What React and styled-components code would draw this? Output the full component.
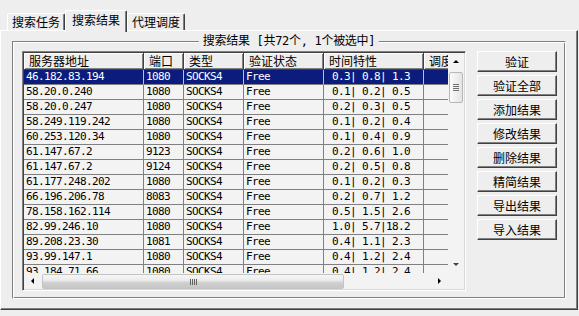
import React from "react";
import styled, { createGlobalStyle } from "styled-components";

const BG = "#eeeeee";
const LIST_BG = "#f3f3f3";
const SEL = "#0c1c7c";

const Global = createGlobalStyle`
  html, body { margin: 0; padding: 0; background: ${BG}; }
  body { font-family: "Noto Sans CJK SC", "Noto Sans", sans-serif; font-size: 12px; color: #000; }
  * { box-sizing: border-box; }
`;

const Screen = styled.div`
  width: 579px;
  height: 316px;
  padding-top: 10px;
  background: ${BG};
  overflow: hidden;
`;

const TabStrip = styled.div`
  display: flex;
  align-items: flex-end;
  height: 22px;
  margin-bottom: -2px;
  padding-left: 7px;
`;

const Tab = styled.div`
  position: relative;
  z-index: ${(p) => (p.$active ? 2 : 1)};
  width: ${(p) => p.$w}px;
  height: ${(p) => (p.$active ? 22 : 17)}px;
  margin-bottom: ${(p) => (p.$active ? 0 : 2)}px;
  padding-bottom: ${(p) => (p.$active ? 4 : 0)}px;
  display: flex;
  align-items: center;
  justify-content: center;
  background: ${BG};
  border-top: 1px solid #fff;
  border-left: 1px solid #fff;
  border-right: 1px solid #404040;
  box-shadow: inset -1px 0 0 #808080;
  border-radius: 2px 2px 0 0;
  font-size: 12px;
  line-height: 14px;
  white-space: nowrap;
`;

const Panel = styled.div`
  width: 578px;
  height: 280px;
  border-top: 1px solid #fff;
  border-left: 1px solid #fff;
  border-right: 1px solid #404040;
  border-bottom: 1px solid #404040;
  box-shadow: inset -1px -1px 0 #808080;
  padding: 10px 11px 10px 11px;
`;

const GroupBox = styled.div`
  position: relative;
  height: 258px;
  border: 1px solid;
  border-color: #808080 #fff #fff #808080;
  box-shadow: inset 1px 1px 0 #fff, inset -1px -1px 0 #808080;
  padding: 9px 8px 0 9px;
  display: flex;
  align-items: flex-start;
  gap: 11px;
`;

const GroupTitle = styled.div`
  position: absolute;
  top: -8px;
  left: 50%;
  transform: translateX(-50%);
  padding: 0 4px;
  background: ${BG};
  font-family: "DejaVu Sans Mono", "Noto Sans CJK SC", monospace;
  font-size: 12px;
  letter-spacing: -0.3px;
  line-height: 14px;
  white-space: pre;
`;

const ListView = styled.div`
  width: 444px;
  height: 240px;
  flex: none;
  display: grid;
  grid-template-columns: 424px 16px;
  grid-template-rows: 220px 16px;
  border: 1px solid;
  border-color: #808080 #fff #fff #808080;
  box-shadow: inset 1px 1px 0 #404040, inset -1px -1px 0 #d8d8d8;
  padding: 1px;
  background: ${LIST_BG};
`;

const Body = styled.div`
  overflow: hidden;
  display: flex;
  flex-direction: column;
`;

const HeaderRow = styled.div`
  display: flex;
  flex: none;
  width: max-content;
`;

const HeadCell = styled.div`
  flex: none;
  width: ${(p) => p.$w}px;
  height: 17px;
  padding-left: 5px;
  background: ${BG};
  border-right: 1px solid #404040;
  border-bottom: 1px solid #404040;
  box-shadow: inset 1px 1px 0 #fff, inset -1px -1px 0 #808080;
  font-size: 12px;
  line-height: 16px;
  white-space: nowrap;
  overflow: hidden;
`;

const Row = styled.div`
  display: flex;
  flex: none;
  width: max-content;
  background: ${(p) => (p.$sel ? SEL : "transparent")};
  color: ${(p) => (p.$sel ? "#fff" : "#000")};
`;

const Cell = styled.div`
  flex: none;
  width: ${(p) => p.$w}px;
  height: 15px;
  padding-left: 2px;
  border-right: 1px solid ${(p) => (p.$sel ? "#c0c0c0" : "#808080")};
  border-bottom: 1px solid #808080;
  font-family: "DejaVu Sans Mono", "Liberation Mono", monospace;
  font-size: 11px;
  letter-spacing: -0.62px;
  line-height: 14px;
  white-space: pre;
  overflow: hidden;
`;

const VScroll = styled.div`
  display: flex;
  flex-direction: column;
  background: ${LIST_BG};
`;

const HScroll = styled.div`
  display: flex;
  background: ${LIST_BG};
`;

const Corner = styled.div`
  background: ${LIST_BG};
`;

const ArrowBox = styled.div`
  flex: none;
  width: ${(p) => (p.$h ? 17 : 16)}px;
  height: ${(p) => (p.$h ? 16 : 17)}px;
  display: flex;
  align-items: center;
  justify-content: center;
`;

const Tri = styled.span`
  width: 0;
  height: 0;
  ${(p) =>
    p.$dir === "up"
      ? `border-left:3px solid transparent;border-right:3px solid transparent;border-bottom:3px solid #000;`
      : p.$dir === "down"
      ? `border-left:3px solid transparent;border-right:3px solid transparent;border-top:3px solid #404040;`
      : p.$dir === "left"
      ? `border-top:3px solid transparent;border-bottom:3px solid transparent;border-right:3px solid #000;`
      : `border-top:3px solid transparent;border-bottom:3px solid transparent;border-left:3px solid #000;`}
`;

const VThumb = styled.div`
  flex: none;
  margin: 2px 1px 0 1px;
  width: 14px;
  height: 31px;
  border: 1px solid #b8b8b8;
  border-radius: 2px;
  background: linear-gradient(to right, #fafafa, #e4e4e4);
  display: flex;
  flex-direction: column;
  align-items: center;
  justify-content: center;
  gap: 1px;
`;

const VGrip = styled.span`
  width: 6px;
  height: 1px;
  background: #707070;
`;

const HThumb = styled.div`
  flex: none;
  margin-left: 1px;
  width: 302px;
  height: 15px;
  margin-top: 1px;
  border: 1px solid #c4c4c4;
  border-radius: 2px;
  background: linear-gradient(#f6f6f6 0%, #ececec 40%, #cfcfcf 60%, #c6c6c6 100%);
  display: flex;
  align-items: center;
  justify-content: center;
  gap: 1px;
`;

const HGrip = styled.span`
  width: 1px;
  height: 6px;
  background: #606060;
`;

const Spacer = styled.div`
  flex: 1;
`;

const ButtonCol = styled.div`
  flex: none;
  width: 80px;
  display: flex;
  flex-direction: column;
  gap: 3px;
`;

const Btn = styled.button`
  width: 80px;
  height: 21px;
  padding: 0;
  background: ${BG};
  border: 1px solid;
  border-color: #fff #404040 #404040 #fff;
  box-shadow: inset -1px -1px 0 #808080;
  font-family: "Noto Sans CJK SC", sans-serif;
  font-size: 12px;
  line-height: 19px;
  color: #000;
`;

const COLS = [
  { title: "服务器地址", w: 120 },
  { title: "端口", w: 40 },
  { title: "类型", w: 60 },
  { title: "验证状态", w: 80 },
  { title: "时间特性", w: 100 },
  { title: "调度", w: 150 },
];

const DATA = [
  ["46.182.83.194", "1080", 0.3, 0.8, 1.3],
  ["58.20.0.240", "1080", 0.1, 0.2, 0.5],
  ["58.20.0.247", "1080", 0.2, 0.3, 0.5],
  ["58.249.119.242", "1080", 0.1, 0.2, 0.4],
  ["60.253.120.34", "1080", 0.1, 0.4, 0.9],
  ["61.147.67.2", "9123", 0.2, 0.6, 1.0],
  ["61.147.67.2", "9124", 0.2, 0.5, 0.8],
  ["61.177.248.202", "1080", 0.1, 0.2, 0.3],
  ["66.196.206.78", "8083", 0.2, 0.7, 1.2],
  ["78.158.162.114", "1080", 0.5, 1.5, 2.6],
  ["82.99.246.10", "1080", 1.0, 5.7, 18.2],
  ["89.208.23.30", "1081", 0.4, 1.1, 2.3],
  ["93.99.147.1", "1080", 0.4, 1.2, 2.4],
  ["93.184.71.66", "1080", 0.4, 1.2, 2.4],
];

const fmt = (a, b, c) => [a, b, c].map((v) => v.toFixed(1).padStart(4, " ")).join("|");

const BUTTONS = ["验证", "验证全部", "添加结果", "修改结果", "删除结果", "精简结果", "导出结果", "导入结果"];

export default function App() {
  return (
    <Screen>
      <Global />
      <TabStrip>
        <Tab $w={58}>搜索任务</Tab>
        <Tab $w={62} $active>搜索结果</Tab>
        <Tab $w={58}>代理调度</Tab>
      </TabStrip>
      <Panel>
        <GroupBox>
          <GroupTitle>搜索结果 [共72个, 1个被选中]</GroupTitle>
          <ListView>
            <Body>
              <HeaderRow>
                {COLS.map((c) => (
                  <HeadCell key={c.title} $w={c.w}>{c.title}</HeadCell>
                ))}
              </HeaderRow>
              {DATA.map((r, i) => {
                const sel = i === 0;
                const vals = [r[0], r[1], "SOCKS4", "Free", fmt(r[2], r[3], r[4]), ""];
                return (
                  <Row key={i} $sel={sel}>
                    {vals.map((v, j) => (
                      <Cell key={j} $w={COLS[j].w} $sel={sel}>{v}</Cell>
                    ))}
                  </Row>
                );
              })}
            </Body>
            <VScroll>
              <ArrowBox><Tri $dir="up" /></ArrowBox>
              <VThumb><VGrip /><VGrip /><VGrip /><VGrip /></VThumb>
              <Spacer />
              <ArrowBox><Tri $dir="down" /></ArrowBox>
            </VScroll>
            <HScroll>
              <ArrowBox $h><Tri $dir="left" /></ArrowBox>
              <HThumb><HGrip /><HGrip /><HGrip /><HGrip /></HThumb>
              <Spacer />
              <ArrowBox $h><Tri $dir="right" /></ArrowBox>
            </HScroll>
            <Corner />
          </ListView>
          <ButtonCol>
            {BUTTONS.map((b) => (
              <Btn key={b}>{b}</Btn>
            ))}
          </ButtonCol>
        </GroupBox>
      </Panel>
    </Screen>
  );
}
